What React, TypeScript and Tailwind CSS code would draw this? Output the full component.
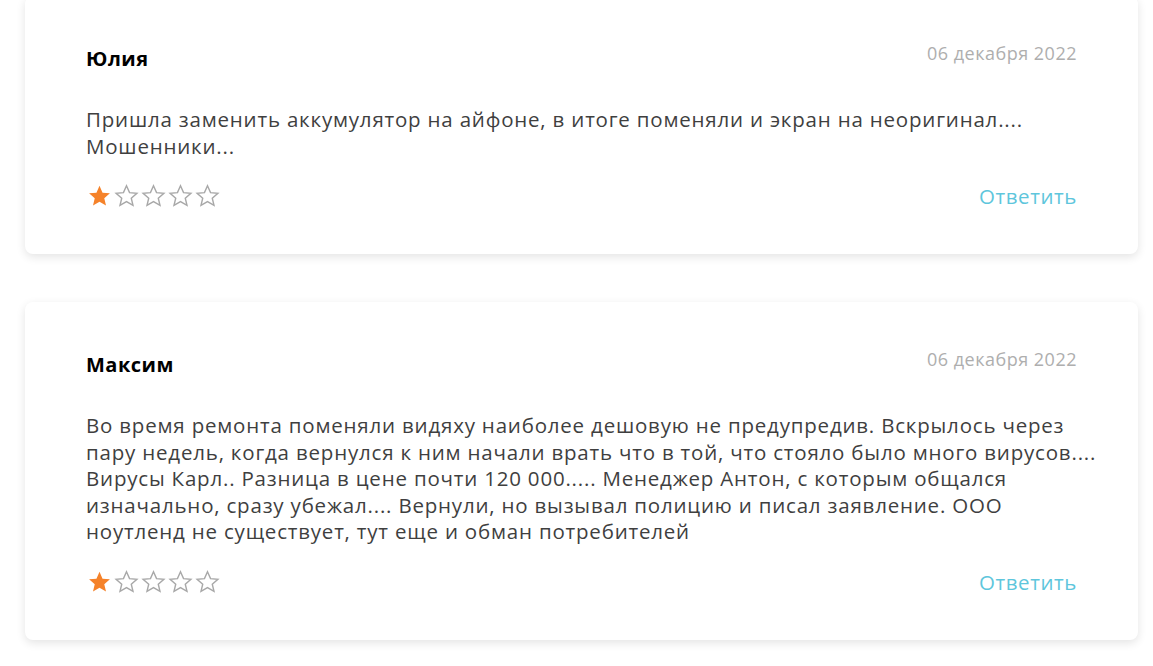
import type { ReactNode } from "react";

type Review = {
  name: string;
  date: string;
  rating: number;
  lines: string[];
};

const REVIEWS: Review[] = [
  {
    name: "Юлия",
    date: "06 декабря 2022",
    rating: 1,
    lines: [
      "Пришла заменить аккумулятор на айфоне, в итоге поменяли и экран на неоригинал....",
      "Мошенники...",
    ],
  },
  {
    name: "Максим",
    date: "06 декабря 2022",
    rating: 1,
    lines: [
      "Во время ремонта поменяли видяху наиболее дешовую не предупредив. Вскрылось через",
      "пару недель, когда вернулся к ним начали врать что в той, что стояло было много вирусов....",
      "Вирусы Карл.. Разница в цене почти 120 000..... Менеджер Антон, с которым общался",
      "изначально, сразу убежал.... Вернули, но вызывал полицию и писал заявление. ООО",
      "ноутленд не существует, тут еще и обман потребителей",
    ],
  },
];

const STAR =
  "M12 2.6l2.8 6.3 6.8.6-5.2 4.5 1.6 6.7L12 17.2l-6 3.5 1.6-6.7L2.4 9.5l6.8-.6z";

function Star({ filled }: { filled: boolean }) {
  return (
    <svg width="27" height="26" viewBox="0 0 24 24" className="shrink-0">
      {filled ? (
        <path d={STAR} fill="#f5822a" />
      ) : (
        <path d={STAR} fill="none" stroke="#a8a8a8" strokeWidth="1.3" strokeLinejoin="miter" />
      )}
    </svg>
  );
}

function Card({ children }: { children: ReactNode }) {
  return (
    <div className="w-[1113px] rounded-lg bg-white shadow-[0_3px_10px_rgba(0,0,0,0.11)] pt-[50px] pb-[45px] px-[61px]">
      {children}
    </div>
  );
}

export default function App() {
  return (
    <div
      className="min-h-[666px] bg-white pl-[25px] overflow-hidden"
      style={{ fontFamily: '"Open Sans", "Noto Sans", sans-serif' }}
    >
      <div className="flex flex-col gap-[48px] -mt-[4px]">
        {REVIEWS.map((r) => (
          <Card key={r.name}>
            <div className="flex items-start justify-between">
              <div className="text-[20px] leading-[26px] font-bold tracking-[0.5px] text-black">
                {r.name}
              </div>
              <div className="text-[18px] leading-[14px] tracking-[0.5px] text-[#aeaeae]">
                {r.date}
              </div>
            </div>
            <p className="mt-[34px] text-[20.5px] leading-[26.5px] tracking-[0.8px] text-[#3f3f3f] whitespace-nowrap">
              {r.lines.map((l, i) => (
                <span key={i} className="block">
                  {l}
                </span>
              ))}
            </p>
            <div className="mt-[24px] flex items-center justify-between">
              <div className="flex items-center">
                {[1, 2, 3, 4, 5].map((n) => (
                  <Star key={n} filled={n <= r.rating} />
                ))}
              </div>
              <a
                href="#"
                className="text-[20.5px] leading-[26px] tracking-[0.6px] text-[#5ec6dc]"
              >
                Ответить
              </a>
            </div>
          </Card>
        ))}
      </div>
    </div>
  );
}
